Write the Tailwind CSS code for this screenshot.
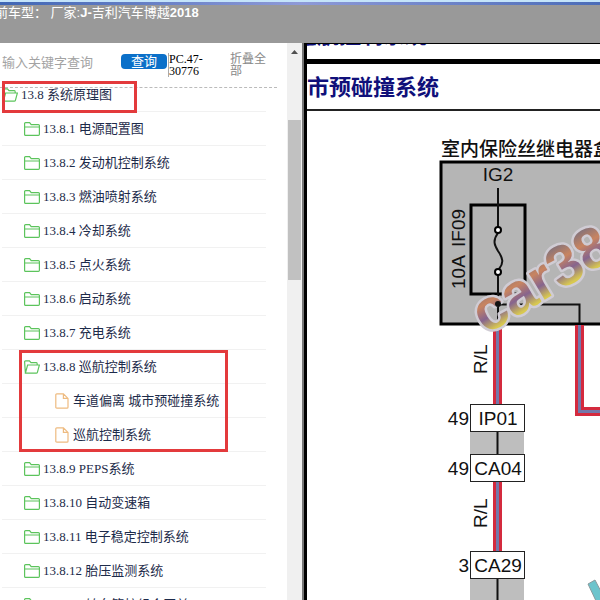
<!DOCTYPE html>
<html lang="zh-CN">
<head>
  <meta charset="UTF-8" />
  <meta name="viewport" content="width=device-width, initial-scale=1.0" />
  <title>吉利汽车博越2018 系统原理图</title>
  <script src="https://cdn.jsdelivr.net/npm/@tailwindcss/browser@4"></script>
</head>
<body class="flex h-screen flex-col overflow-hidden bg-white font-['Liberation_Serif','Noto_Sans_CJK_SC',serif] text-[13px] text-[#1d2b4a]">
  <!-- Icons used by the tree -->
  <svg class="hidden">
    <symbol id="folder" viewBox="0 0 16 14">
      <path d="M.6 12.2V1.6Q.6.6 1.6.6H5.6L7.2 2.6H14.4Q15.4 2.6 15.4 3.6V12.2Q15.4 13.4 14.4 13.4H1.6Q.6 13.4.6 12.2ZM.6 5H15.4" fill="none" stroke="#5cc45c" stroke-width="1.2" />
    </symbol>
    <symbol id="folder-open" viewBox="0 0 16 14">
      <path d="M1.4 13.2L.6 1.8Q.6.8 1.6.8H5.4L7 2.6H12.4Q13.2 2.6 13.2 4V5M1.4 13.2L3.6 5H15.4L13.4 12.4Q13.2 13.2 12.2 13.2Z" fill="none" stroke="#5cc45c" stroke-width="1.2" />
    </symbol>
    <symbol id="file" viewBox="0 0 14 16">
      <path d="M.8 1.8Q.8.8 1.8.8H8.4L13 5.4V14.2Q13 15.2 12 15.2H1.8Q.8 15.2.8 14.2ZM8.4.8V5.4H13" fill="none" stroke="#eebb80" stroke-width="1.2" />
    </symbol>
  </svg>

  <header class="h-[43px] shrink-0 overflow-hidden bg-[#999] font-['Liberation_Sans','Noto_Sans_CJK_SC',sans-serif] text-white">
    <div class="h-[2px] bg-[#c4e4fa]"></div>
    <div class="h-[3px] bg-linear-to-r from-[#3f66b4] via-[#8e9ad8] to-[#4a6cb8]"></div>
    <p class="-ml-[18px] whitespace-pre leading-4">当前车型： 厂家:<b>J-</b>吉利汽车博越<b>2018</b></p>
  </header>

  <div class="flex min-h-0 flex-1">
    <aside class="w-[287px] shrink-0 overflow-hidden">
      <form class="mr-[10px] flex h-[45px] items-start border-b border-dashed border-[#bbb] pt-[10px]">
        <input type="text" aria-label="关键字" placeholder="输入关键字查询" class="ml-[2px] h-5 w-[119px] outline-none placeholder:text-[#a3a3a3]" />
        <button type="button" class="mt-px h-[15px] w-[46px] shrink-0 rounded bg-[#0b70c9] leading-[15px] text-white">查询</button>
        <p class="ml-px w-[46px] border-l border-[#aaa] text-xs leading-[12px] text-black">PC.47-<br />30776</p>
        <button type="button" class="ml-[16px] w-[40px] text-left text-xs leading-[12px] text-[#888]">折叠全部</button>
      </form>

      <ul class="-mt-[10px] mr-[21px] ml-[2px]">
        <li class="relative">
          <a href="#" class="flex h-[34px] items-center gap-[3px] border-b border-[#f1f1f1]"><svg class="h-[14px] w-4"><use href="#folder-open" /></svg>13.8 系统原理图</a>
          <span class="pointer-events-none absolute top-[3px] left-0 h-[32px] w-[135px] border-3 border-[#e33a3c]"></span>
        </li>
        <li><a href="#" class="flex h-[34px] items-center gap-[3px] border-b border-[#f1f1f1] pl-[22px]"><svg class="h-[14px] w-4"><use href="#folder" /></svg>13.8.1 电源配置图</a></li>
        <li><a href="#" class="flex h-[34px] items-center gap-[3px] border-b border-[#f1f1f1] pl-[22px]"><svg class="h-[14px] w-4"><use href="#folder" /></svg>13.8.2 发动机控制系统</a></li>
        <li><a href="#" class="flex h-[34px] items-center gap-[3px] border-b border-[#f1f1f1] pl-[22px]"><svg class="h-[14px] w-4"><use href="#folder" /></svg>13.8.3 燃油喷射系统</a></li>
        <li><a href="#" class="flex h-[34px] items-center gap-[3px] border-b border-[#f1f1f1] pl-[22px]"><svg class="h-[14px] w-4"><use href="#folder" /></svg>13.8.4 冷却系统</a></li>
        <li><a href="#" class="flex h-[34px] items-center gap-[3px] border-b border-[#f1f1f1] pl-[22px]"><svg class="h-[14px] w-4"><use href="#folder" /></svg>13.8.5 点火系统</a></li>
        <li><a href="#" class="flex h-[34px] items-center gap-[3px] border-b border-[#f1f1f1] pl-[22px]"><svg class="h-[14px] w-4"><use href="#folder" /></svg>13.8.6 启动系统</a></li>
        <li><a href="#" class="flex h-[34px] items-center gap-[3px] border-b border-[#f1f1f1] pl-[22px]"><svg class="h-[14px] w-4"><use href="#folder" /></svg>13.8.7 充电系统</a></li>
        <li class="relative">
          <a href="#" class="flex h-[34px] items-center gap-[3px] border-b border-[#f1f1f1] pl-[22px]"><svg class="h-[14px] w-4"><use href="#folder-open" /></svg>13.8.8 巡航控制系统</a>
          <ul>
            <li><a href="#" class="flex h-[34px] items-center gap-1 border-b border-[#f1f1f1] pl-[53px]"><svg class="h-4 w-[14px]"><use href="#file" /></svg>车道偏离 城市预碰撞系统</a></li>
            <li><a href="#" class="flex h-[34px] items-center gap-1 border-b border-[#f1f1f1] pl-[53px]"><svg class="h-4 w-[14px]"><use href="#file" /></svg>巡航控制系统</a></li>
          </ul>
          <span class="pointer-events-none absolute top-0 left-[17px] h-[102px] w-[209px] border-3 border-[#e33a3c]"></span>
        </li>
        <li><a href="#" class="flex h-[34px] items-center gap-[3px] border-b border-[#f1f1f1] pl-[22px]"><svg class="h-[14px] w-4"><use href="#folder" /></svg>13.8.9 PEPS系统</a></li>
        <li><a href="#" class="flex h-[34px] items-center gap-[3px] border-b border-[#f1f1f1] pl-[22px]"><svg class="h-[14px] w-4"><use href="#folder" /></svg>13.8.10 自动变速箱</a></li>
        <li><a href="#" class="flex h-[34px] items-center gap-[3px] border-b border-[#f1f1f1] pl-[22px]"><svg class="h-[14px] w-4"><use href="#folder" /></svg>13.8.11 电子稳定控制系统</a></li>
        <li><a href="#" class="flex h-[34px] items-center gap-[3px] border-b border-[#f1f1f1] pl-[22px]"><svg class="h-[14px] w-4"><use href="#folder" /></svg>13.8.12 胎压监测系统</a></li>
        <li><a href="#" class="flex h-[34px] items-center gap-[3px] border-b border-[#f1f1f1] pl-[22px]"><svg class="h-[14px] w-4"><use href="#folder" /></svg>13.8.13 转向管柱组合开关</a></li>
      </ul>
    </aside>

    <!-- Scrollbar -->
    <div class="flex w-[15px] shrink-0 flex-col items-center bg-[#f0f0f0] pt-[7px]">
      <svg class="h-[4px] w-[7px]" viewBox="0 0 7 4"><path d="M0 4L3.5 0L7 4Z" fill="#505050" /></svg>
      <div class="mt-[66px] h-[160px] w-[13px] bg-[#c1c1c1]"></div>
    </div>
    <div class="w-[2px] shrink-0 bg-[#777]"></div>

    <main class="flex min-w-0 flex-1 flex-col overflow-hidden border-t border-l-3 border-black font-['Liberation_Sans','Noto_Sans_CJK_SC',sans-serif] font-bold whitespace-nowrap text-[#10107a]">
      <p class="flex h-[20px] shrink-0 items-end overflow-hidden border-b-5 border-black text-[22px] leading-[28px]"><span class="-ml-[12px] pb-[9px]">巡航控制系统</span></p>
      <h1 class="h-[47px] shrink-0 border-b-2 border-[#222] text-[22px] leading-[47px]">市预碰撞系统</h1>

      <svg class="min-h-0 w-full flex-1 font-normal" font-size="19" fill="#111">
        <defs>
          <linearGradient id="shine" x1="0" y1="0" x2="0" y2="1">
            <stop offset="0.2" stop-color="#8a7478" />
            <stop offset="0.4" stop-color="#c88460" />
            <stop offset="0.6" stop-color="#86648e" />
            <stop offset="0.8" stop-color="#d8c850" />
          </linearGradient>
        </defs>
        <text x="134" y="45" font-weight="500">室内保险丝继电器盒</text>

        <!-- Fuse box -->
        <rect x="134" y="51" width="1000" height="162" fill="#b5b5b5" stroke="#000" stroke-width="3" />
        <text x="191" y="70" text-anchor="middle">IG2</text>
        <rect x="164" y="94" width="54" height="89" fill="none" stroke="#000" stroke-width="3" />
        <path d="M191 77V116M191 122C185 130 188 135 191 140C196 147 197 152 192 158M191 164V212M191 193.5H272.5V212" fill="none" stroke="#111" stroke-width="2" />
        <g fill="#fff" stroke="#000" stroke-width="2"><circle cx="191" cy="119" r="3" /><circle cx="191" cy="161" r="3" /></g>
        <text transform="translate(158 178) rotate(-90)">10A</text>
        <text transform="translate(158 136) rotate(-90)">IF09</text>

        <!-- Wires -->
        <path d="M190.5 214V293M190.5 370V440M272.5 214V300.5H1100" fill="none" stroke="#d42a3e" stroke-width="9" />
        <path d="M190.5 214V293M190.5 370V440M272.5 214V300.5H1100" fill="none" stroke="#7478aa" stroke-width="3" />
        <text transform="translate(180 263) rotate(-90)">R/L</text>
        <text transform="translate(180 417) rotate(-90)">R/L</text>

        <!-- Connectors -->
        <g fill="#bebebe"><rect x="163" y="320" width="54" height="23" /><rect x="163" y="467" width="54" height="400" /></g>
        <path d="M190.5 320V343M190.5 467V867" stroke="#111" stroke-width="2" />
        <g fill="#fff" stroke="#222">
          <rect x="163.5" y="293.5" width="54" height="27" />
          <rect x="163.5" y="343.5" width="54" height="27" />
          <rect x="163.5" y="440.5" width="54" height="27" />
        </g>
        <g text-anchor="middle"><text x="191" y="314">IP01</text><text x="191" y="364">CA04</text><text x="191" y="461">CA29</text></g>
        <g text-anchor="end"><text x="162" y="314">49</text><text x="162" y="364">49</text><text x="162" y="461">3</text></g>

        <!-- Watermark -->
        <text transform="translate(179 224) rotate(-31)" font-size="58" font-weight="bold" fill="url(#shine)" stroke="#d0ccd4" stroke-width="5" stroke-linejoin="round" paint-order="stroke">car38</text>
        <circle cx="191" cy="193" r="3" />
        <path d="M281 473L288 469L300 492H290Z" fill="#6cc4cc" stroke="#8a9a9e" />
      </svg>
    </main>
  </div>
</body>
</html>
